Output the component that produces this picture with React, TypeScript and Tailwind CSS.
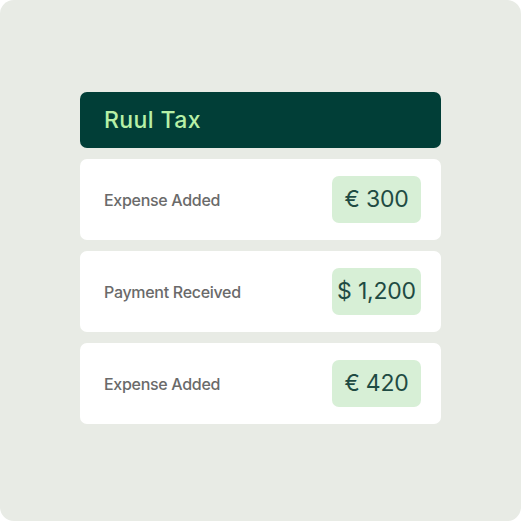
import React from "react";

const rows = [
  { label: "Expense Added", amount: "€ 300" },
  { label: "Payment Received", amount: "$ 1,200" },
  { label: "Expense Added", amount: "€ 420" },
];

export default function App() {
  return (
    <div className="w-[521px] h-[521px] bg-white">
      <div
        className="w-full h-full rounded-[14px] bg-[#e8ebe5] pt-[92px] px-[80px]"
        style={{ fontFamily: "Inter, 'Noto Sans', sans-serif" }}
      >
        <div className="w-[361px] flex flex-col gap-[11px]">
          <div className="h-[56px] rounded-[7px] bg-[#013e37] flex items-center px-[24px]">
            <span className="text-[23px] font-medium text-[#b7f0a6] tracking-[0.4px]">Ruul Tax</span>
          </div>
          {rows.map((r, i) => (
            <div
              key={i}
              className="h-[81px] rounded-[7px] bg-white flex items-center justify-between pl-[24px] pr-[20px]"
            >
              <span className="text-[16px] font-medium text-[#6a6a6a] tracking-[-0.3px]">{r.label}</span>
              <div className="h-[47px] w-[89px] rounded-[7px] bg-[#d7efd6] flex items-center justify-center">
                <span className="text-[23px] text-[#1f4b43] tracking-[-0.2px]">{r.amount}</span>
              </div>
            </div>
          ))}
        </div>
      </div>
    </div>
  );
}
